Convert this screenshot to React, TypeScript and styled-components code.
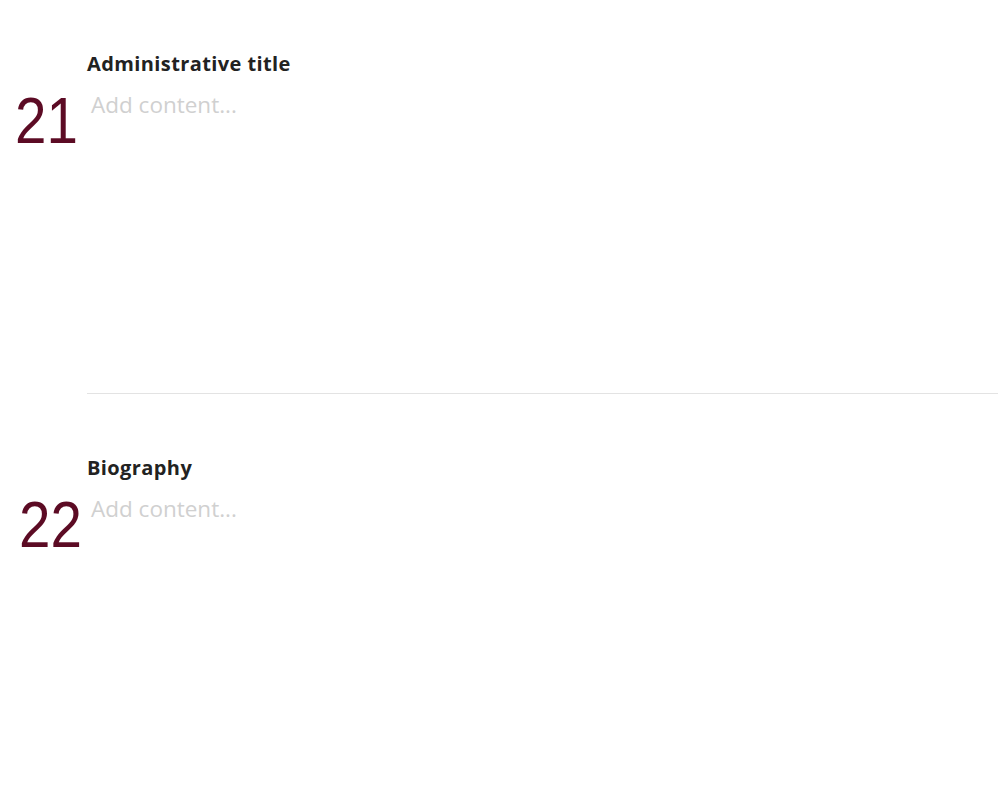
import React from 'react';
import styled, { createGlobalStyle } from 'styled-components';

const GlobalStyle = createGlobalStyle`
    html, body {
        margin: 0;
        padding: 0;
        background: #ffffff;
    }
    body {
        font-family: "Open Sans", "Liberation Sans", sans-serif;
    }
`;

interface IField {
    number: number;
    label: string;
    numberLeft: number;
}

// numberLeft is measured from the left edge of the content column
const fields: IField[] = [
    { number: 21, label: 'Administrative title', numberLeft: -72 },
    { number: 22, label: 'Biography', numberLeft: -68 },
];

export default function App() {
    return (
        <>
            <GlobalStyle />
            <Page>
                {fields.map((field, i) => (
                    <Section key={field.number} $last={i === fields.length - 1}>
                        <Label>{field.label}</Label>
                        <Row>
                            <Number $left={field.numberLeft}>{field.number}</Number>
                            <Placeholder>Add content...</Placeholder>
                        </Row>
                    </Section>
                ))}
            </Page>
        </>
    );
}

const Page = styled.div`
    width: 998px;
    height: 798px;
    overflow: hidden;
    padding: 50px 0 0 87px;
    box-sizing: border-box;
`;

const Section = styled.section<{ $last: boolean }>`
    height: 344px;
    margin-bottom: 60px;
    border-bottom: ${({ $last }) => ($last ? 'none' : '1px solid #e3e3e3')};
    box-sizing: border-box;
`;

const Label = styled.div`
    font-size: 20px;
    font-weight: 700;
    color: #222222;
    line-height: 28px;
    letter-spacing: 0.4px;
`;

const Row = styled.div`
    position: relative;
    margin-top: 11px;
`;

const Number = styled.span<{ $left: number }>`
    position: absolute;
    top: -1px;
    left: ${({ $left }) => $left}px;
    font-family: "Liberation Sans", Arial, sans-serif;
    font-size: 65px;
    line-height: 65px;
    color: #5c0b24;
    transform: scaleX(0.87);
    transform-origin: left top;
`;

const Placeholder = styled.div`
    padding-left: 4px;
    font-size: 22.5px;
    line-height: 32px;
    color: #d0d0d0;
`;
